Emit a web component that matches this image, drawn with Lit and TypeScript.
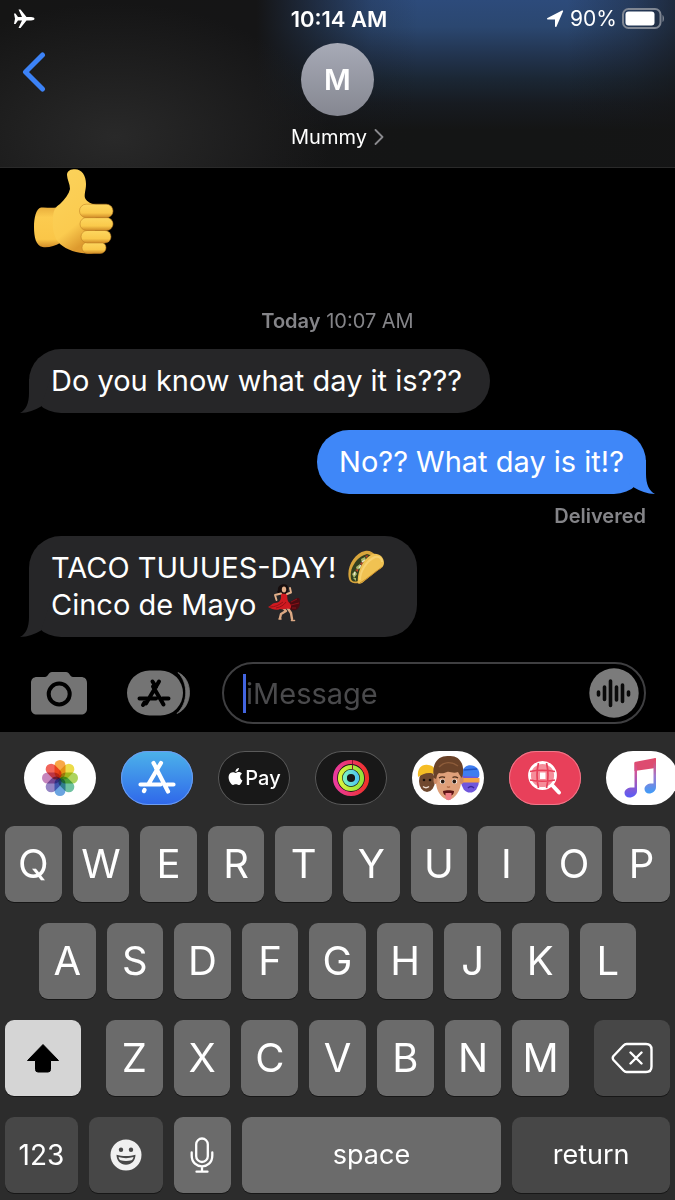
import { LitElement, html, css, svg, nothing } from "lit";
import { customElement, property, state } from "lit/decorators.js";
import { classMap } from "lit/directives/class-map.js";

const thumbsUp = html`<svg class="thumb" viewBox="0 0 80 86" role="img" aria-label="Thumbs up">
  <defs>
    <linearGradient id="palm" x1="0" y1="0" x2="0.4" y2="1">
      <stop offset="0" stop-color="#fbd35c" /><stop offset="0.75" stop-color="#fbcb4f" /><stop offset="1" stop-color="#dd9a2e" />
    </linearGradient>
    <linearGradient id="wrist" x1="0" y1="0" x2="0" y2="1">
      <stop offset="0" stop-color="#e9ae3c" /><stop offset="0.25" stop-color="#fccb4f" /><stop offset="0.8" stop-color="#fac648" /><stop offset="1" stop-color="#d18c28" />
    </linearGradient>
    <linearGradient id="finger" x1="0" y1="0" x2="0" y2="1">
      <stop offset="0" stop-color="#fdd75f" /><stop offset="0.65" stop-color="#fac94b" /><stop offset="1" stop-color="#cf8a26" />
    </linearGradient>
  </defs>
  <path d="M7 38.500C12 38 17 39.500 22 38.500L26 74C21 77 14 79 8.500 78C2 77 0 68 0 58C0 49 2 39.500 7 38.500Z" fill="url(#wrist)" />
  <path d="M33 6C33 1.500 37 .3 41 .3C48 .3 52 7 52 15C52 21 50 25 51 29C53 33 58 35 62 36L60 84C48 86 34 82 26 75C20 69 18 60 19 50C19 42 21 38 26 35C31 30 35 25 36 20C36 15 33 10 33 6Z" fill="url(#palm)" />
  <g stroke="#c08023" stroke-opacity=".55">
    <rect x="48" y="73" width="24" height="11.500" rx="5.700" fill="url(#finger)" />
    <rect x="47" y="61.500" width="30" height="12.500" rx="6.200" fill="url(#finger)" />
    <rect x="46" y="48.500" width="33" height="13" rx="6.500" fill="url(#finger)" />
    <rect x="45.500" y="35.200" width="33.500" height="13.500" rx="6.700" fill="url(#finger)" />
  </g>
</svg>`;

const taco = html`<svg class="emoji" viewBox="0 0 38 34" role="img" aria-label="Taco">
  <path d="M2 29C-1 18 7 3 18 1C22 0 26 2 28 5L12 33C8 34 3 33 2 29Z" fill="#d8a53c" />
  <path d="M4 29C2 19 9 7 20 4L26 6L11 31C8 32 5 32 4 29Z" fill="#33401f" />
  <path d="M5 24l3-3 2 3-3 4zM9 17l4-3 1 4-4 2zM14 9l4-2 1 3-4 3zM6 28l3 0 0 3z" fill="#a9b76a" />
  <path d="M8 20l3-1 0 3zM13 13l3-1-1 4zM18 6l3-1-1 3z" fill="#b8452b" />
  <path d="M7 25l1-3M12 18l2-3M15 12l3-2" stroke="#efe7cf" stroke-width="1.300" />
  <path d="M11 33C10 22 16 8 26 4C32 3 37 7 37 13C37 16 35 18 31 20L15 33C13 34 11 34 11 33Z" fill="#f0c252" />
  <path d="M13 30C13 22 19 11 28 7C32 6 35 8 35 12" fill="none" stroke="#fbdc83" stroke-width="2" opacity=".6" />
  <path d="M13 33C20 29 28 22 35 17" fill="none" stroke="#c98e2a" stroke-width="1" />
</svg>`;

const dancer = html`<svg class="emoji dancer" viewBox="0 0 34 38" role="img" aria-label="Woman dancing">
  <path d="M11 6C10 1 17-1 20 1C22 4 21 8 19 10C16 11 12 10 10 8Z" fill="#160d0d" />
  <path d="M21 18C24 19 28 13 32 14C34 18 33 24 29 26C25 27 22 25 20 23Z" fill="#4b0a10" />
  <path d="M24 18L30 15M24 21L32 19M25 24L29 24" stroke="#8c1018" stroke-width="1" />
  <path d="M16 24L19 27L14 30L13 34M20 23L24 29L25 35" fill="none" stroke="#dca984" stroke-width="2.400" stroke-linecap="round" stroke-linejoin="round" />
  <path d="M14 9.500L20 10C20.500 13 20 16 21.500 18C24 20 25 23 23 25C19 24 17 26 13 25C9 27 5 25 1 23C4 22 5 19 8 19C12 19 14 16 14 13Z" fill="#cf1a20" />
  <path d="M3 23C8 23 12 21 16 18M9 24C14 23 17 21 19 18" fill="none" stroke="#8d0e14" stroke-width=".9" />
  <path d="M14 9.500L8 11L9.500 16M20 10L24 8.500L23 4" fill="none" stroke="#e3b08a" stroke-width="1.900" stroke-linecap="round" stroke-linejoin="round" />
  <ellipse cx="17" cy="5.500" rx="2.200" ry="2.900" fill="#e3b08a" />
  <path d="M12 35h2M24.500 36.500h3" stroke="#dca984" stroke-width="1.600" stroke-linecap="round" />
</svg>`;

const storeGlyph = svg`
  <path d="M-1.500-12.500L2-7M5-12.500L-8 9.500M-1-7.500L9.500 10.500M-14.500 4.500H2M8.500 4.500H14.500" fill="none" stroke="currentColor" stroke-width="4" stroke-linecap="round" />
  <path d="M-9.500 8.500L-11 11" fill="none" stroke="currentColor" stroke-width="4" stroke-linecap="round" />`;

const petals = ["#f7941d", "#e8d420", "#9bca3c", "#4fb58c", "#4a90d9", "#7d6bb8", "#b96bae", "#ee4136"];

const art = {
  photos: html`<svg viewBox="0 0 72 54" aria-hidden="true">
    <g class="petals">${petals.map((c, i) => svg`<rect x="30.500" y="9" width="11" height="18" rx="5.500" fill=${c} opacity=".82" transform="rotate(${i * 45} 36 27)" />`)}</g>
  </svg>`,
  store: html`<svg viewBox="0 0 72 54" aria-hidden="true"><g transform="translate(36 27)">
    <path d="M-3.500-15L-.5-9.500M4-15L-8.500 6M-1-10L11 13.500M-16.500 6.500H3.500M10 6.500H16.500M-12.500 12L-13 13" fill="none" stroke="#fff" stroke-width="4.200" stroke-linecap="round" />
  </g></svg>`,
  pay: html`<svg class="apple" viewBox="0 0 24 24" aria-hidden="true"><path fill="#fff" d="M12.152 6.896c-.948 0-2.415-1.078-3.960-1.040-2.040.027-3.910 1.183-4.961 3.014-2.117 3.675-.546 9.103 1.519 12.090 1.013 1.454 2.208 3.090 3.792 3.039 1.520-.065 2.090-.987 3.935-.987 1.831 0 2.350.987 3.960.948 1.637-.026 2.676-1.480 3.676-2.948 1.156-1.688 1.636-3.325 1.662-3.415-.039-.013-3.182-1.221-3.220-4.857-.026-3.040 2.480-4.494 2.597-4.559-1.429-2.090-3.623-2.324-4.390-2.376-2-.156-3.675 1.090-4.610 1.090zM15.530 3.830c.843-1.012 1.400-2.427 1.245-3.830-1.207.052-2.662.805-3.532 1.818-.780.896-1.454 2.338-1.273 3.714 1.338.104 2.715-.688 3.559-1.701" /></svg><span class="pay-word">Pay</span>`,
  fitness: html`<svg viewBox="0 0 72 54" aria-hidden="true">
    <defs>
      <linearGradient id="move"><stop offset="0" stop-color="#ea3a9d" /><stop offset="1" stop-color="#f0322b" /></linearGradient>
      <linearGradient id="exercise"><stop offset="0" stop-color="#d9f43c" /><stop offset="1" stop-color="#93e43b" /></linearGradient>
      <linearGradient id="stand"><stop offset="0" stop-color="#7af0c2" /><stop offset="1" stop-color="#50c8f0" /></linearGradient>
    </defs>
    <g fill="none" stroke-width="4.200">
      <circle cx="36" cy="27" r="16" stroke="url(#move)" />
      <circle cx="36" cy="27" r="11" stroke="url(#exercise)" />
      <circle cx="36" cy="27" r="6.200" stroke="url(#stand)" />
    </g>
    <path d="M37.500 9V13M37.500 14V18" stroke="#8b1430" stroke-width="1" />
  </svg>`,
  memoji: html`<svg viewBox="0 0 72 54" aria-hidden="true">
    <ellipse cx="15" cy="30" rx="8" ry="11" fill="#70482e" />
    <path d="M6 26C5 17 10 13 16 14C21 14 24 18 24 24C17 20 11 23 6 26Z" fill="#f5bd25" />
    <path d="M11 35.500Q14 38 17 35.500" stroke="#e8d8cc" stroke-width="1.400" fill="none" /><circle cx="12" cy="29" r="1.300" fill="#1b100a" /><circle cx="18" cy="29" r="1.300" fill="#1b100a" />
    <ellipse cx="58" cy="30" rx="9" ry="11.500" fill="#7057dc" />
    <path d="M50 22C51 15 57 13 62 15C67 17 68 22 67 26L50 25Z" fill="#3e7df0" />
    <path d="M52 19L65 18" stroke="#2255c4" stroke-width="1.500" /><rect x="50" y="27" width="17.500" height="4.500" fill="#f2a347" />
    <path d="M56 37Q59 34 62 37" stroke="#3a259c" stroke-width="1.500" fill="none" />
    <path d="M24 22C24 15 29 12 37 12C45 12 50 16 49 25L49 31C49 39 43 48 36.500 49C30 48 24 40 24 31Z" fill="#dfa07a" />
    <ellipse cx="23.500" cy="29" rx="2" ry="4" fill="#cf8b65" /><ellipse cx="49.500" cy="29" rx="2" ry="4" fill="#cf8b65" />
    <path d="M22 27C19 13 26 4 37 5C47 4 54 13 50 27C48 25 47 23 46 21C41 23 38 20 35 21C31 23 28 22 27 22C25 23 25 25 24 28Z" fill="#6a4228" />
    <path d="M27 16C32 11 39 10 46 15" fill="none" stroke="#8d5c3a" stroke-width="1.500" />
    <path d="M27 27Q30 25 33 26.500M40.500 26.500Q43 25 46 27" fill="none" stroke="#4d2c18" stroke-width="1.400" />
    <ellipse cx="30.500" cy="30.500" rx="2.600" ry="2.200" fill="#fff" /><ellipse cx="42.500" cy="30.500" rx="2.600" ry="2.200" fill="#fff" />
    <circle cx="30.700" cy="30.500" r="1.900" fill="#2a1a10" /><circle cx="42.300" cy="30.500" r="1.900" fill="#2a1a10" />
    <path d="M35 35.500Q36.500 37 38 35.500" fill="none" stroke="#b06b48" stroke-width="1.200" />
    <path d="M31 40C34 39 39 39 42 40C42 43 40 45 36.500 45C33 45 31 43 31 40Z" fill="#5e1515" />
    <path d="M33.500 42H39.500V47C39 50 34 50 33.500 47Z" fill="#ee7f86" />
  </svg>`,
  images: html`<svg viewBox="0 0 72 54" aria-hidden="true">
    <g fill="none" stroke="#fff">
      <circle cx="33.500" cy="24.500" r="13" fill="#f58d9a" stroke-width="2.800" />
      <path d="M29.500 12Q26.500 24 29.500 37M37.500 12Q40.500 24 37.500 37M21 20.500Q33 18 46 20.500M21 29Q33 31.500 46 29" stroke="#e8405a" stroke-width="1.700" />
      <path d="M43.500 34.500L50 41.500" stroke-width="4" stroke-linecap="round" />
    </g>
    <path d="M31 21.500H36.500V28H31Z" fill="#fff" />
  </svg>`,
  music: html`<svg viewBox="0 0 72 54" aria-hidden="true">
    <defs>
      <linearGradient id="stem" gradientUnits="userSpaceOnUse" x1="30" y1="8" x2="30" y2="46"><stop offset="0" stop-color="#e8455e" /><stop offset="0.350" stop-color="#d0569a" /><stop offset="1" stop-color="#5a5cf5" /></linearGradient>
      <linearGradient id="stem2" gradientUnits="userSpaceOnUse" x1="50" y1="8" x2="50" y2="42"><stop offset="0" stop-color="#e8455e" /><stop offset="0.500" stop-color="#a07ad0" /><stop offset="1" stop-color="#3f9bf7" /></linearGradient>
    </defs>
    <path d="M28.500 11L49.500 7V17L28.500 20Z" fill="#dd4c70" />
    <path d="M28.500 12H31V40C31 44 27 46.500 23.500 46.500C20.500 46.500 18.500 44.500 18.500 42C18.500 38.500 22 36.500 26 36.500H28.500Z" fill="url(#stem)" />
    <path d="M47.500 8L50 7V36C50 40 46.500 42.500 43 42.500C40.500 42.500 38.500 40.500 38.500 38C38.500 34.500 42 32.500 45.500 32.500H47.500Z" fill="url(#stem2)" />
  </svg>`,
};

const drawerApps: { id: keyof typeof art; label: string }[] = [
  { id: "photos", label: "Photos" },
  { id: "store", label: "App Store" },
  { id: "pay", label: "Apple Pay" },
  { id: "fitness", label: "Fitness" },
  { id: "memoji", label: "Memoji" },
  { id: "images", label: "#images" },
  { id: "music", label: "Music" },
];

@customElement("chat-bubble")
class ChatBubble extends LitElement {
  @property({ type: Boolean, reflect: true }) sent = false;

  static styles = css`
    :host {
      display: block;
      position: relative;
      align-self: flex-start;
      max-width: 75%;
      box-sizing: border-box;
      padding: 13px 28px 14px 22px;
      border-radius: 32px;
      background: #262628;
      color: #fff;
      font-size: 29px;
      line-height: 37px;
    }
    :host([sent]) {
      align-self: flex-end;
      padding: 13px 22px 14px;
      background: #3f87f8;
    }
    .tail {
      position: absolute;
      bottom: 0;
      left: -9px;
      width: 30px;
      height: 34px;
      fill: #262628;
    }
    :host([sent]) .tail {
      left: auto;
      right: -9px;
      fill: #3f87f8;
      transform: scaleX(-1);
    }
  `;

  render() {
    return html`<svg class="tail" viewBox="0 0 30 34" aria-hidden="true">
        <path d="M9 0V14C9 24 6 31 0 34C8 34 15 31 21 27.500L30 0Z" />
      </svg><slot></slot>`;
  }
}

@customElement("app-root")
class AppRoot extends LitElement {
  @state() private draft = "";

  static styles = css`
    :host {
      display: flex;
      flex-direction: column;
      min-height: 100vh;
      overflow: hidden;
      background: #000;
      color: #fff;
      font-family: Inter, "Liberation Sans", sans-serif;
    }
    svg {
      display: block;
      flex: none;
    }
    button {
      margin: 0;
      padding: 0;
      border: 0;
      background: none;
      color: inherit;
      font: inherit;
      cursor: pointer;
    }
    .top {
      border-bottom: 1px solid #2a2a2a;
      background:
        radial-gradient(ellipse 32% 80% at 17% 82%, #292929 0%, rgba(38, 38, 38, 0) 100%),
        linear-gradient(
          90deg,
          #151515 0%,
          #151516 38%,
          rgba(21, 21, 22, 0.6) 46%,
          rgba(21, 21, 22, 0.15) 55%,
          rgba(21, 21, 22, 0) 62%,
          rgba(21, 21, 22, 0) 84%,
          rgba(21, 21, 22, 0.3) 94%,
          rgba(21, 21, 22, 0.6) 100%
        ),
        linear-gradient(#2d4b7b 0%, #2b4770 16%, #22344f 33%, #1b2735 47%, #171b21 62%, #141515 78%);
    }
    .status {
      display: grid;
      grid-template-columns: 1fr auto 1fr;
      align-items: center;
      height: 37px;
      padding: 0 10px 0 13px;
      font-size: 21px;
      line-height: 24px;
    }
    .time {
      font-size: 22px;
      font-weight: 600;
    }
    .power {
      display: flex;
      align-items: center;
      justify-content: flex-end;
    }
    .locator {
      margin-right: 6px;
    }
    .battery {
      margin-left: 5px;
    }
    .nav {
      display: grid;
      grid-template-columns: 1fr auto 1fr;
      padding: 6px 22px 18px;
    }
    .back {
      justify-self: start;
      align-self: start;
      margin-top: 9px;
    }
    .contact {
      display: flex;
      flex-direction: column;
      align-items: center;
      gap: 9px;
      font-size: 20px;
      line-height: 24px;
    }
    .avatar {
      display: grid;
      place-items: center;
      width: 73px;
      height: 73px;
      border-radius: 50%;
      background: linear-gradient(#a7aab6, #858791);
      font-size: 29px;
      font-weight: 600;
    }
    .name {
      display: flex;
      align-items: center;
      gap: 7px;
    }
    .chat {
      display: flex;
      flex: 1;
      flex-direction: column;
      padding: 1px 29px 0;
    }
    .thumb {
      width: 80px;
      height: 86px;
      margin-left: 5px;
    }
    .stamp {
      align-self: center;
      margin: 54px 0 16px;
      color: #848488;
      font-size: 20px;
      line-height: 24px;
    }
    .stamp strong {
      font-weight: 600;
    }
    .reply {
      margin-top: 17px;
    }
    .receipt {
      align-self: flex-end;
      margin: 10px 0 8px;
      color: #848488;
      font-size: 20px;
      font-weight: 600;
      line-height: 24px;
    }
    .emoji {
      display: inline-block;
      width: 38px;
      height: 34px;
      margin: -4px 4px -4px 2px;
      vertical-align: -2px;
    }
    .dancer {
      width: 34px;
      height: 38px;
      vertical-align: -3px;
    }
    .composer {
      display: flex;
      align-items: center;
      padding: 24px 29px 8px 31px;
    }
    .tool {
      color: #747474;
    }
    .tool-apps {
      margin: 0 32px 0 40px;
    }
    .field {
      display: flex;
      flex: 1;
      align-items: center;
      min-width: 0;
      box-sizing: border-box;
      height: 62px;
      padding: 0 5px 0 19px;
      border: 2px solid #3f3f41;
      border-radius: 31px;
    }
    .caret {
      flex: none;
      width: 3px;
      height: 39px;
      background: #4365e0;
    }
    .entry {
      flex: 1;
      min-width: 0;
      padding: 0;
      border: 0;
      outline: 0;
      background: none;
      color: #fff;
      font: inherit;
      font-size: 29px;
      line-height: 37px;
    }
    .entry::placeholder {
      color: #4a4a4c;
      opacity: 1;
    }
    .keyboard {
      background: #2c2c2c;
    }
    .drawer {
      display: flex;
      gap: 25px;
      overflow: hidden;
      padding: 19px 0 21px 24px;
    }
    .app {
      display: flex;
      flex: none;
      align-items: center;
      justify-content: center;
      width: 72px;
      height: 54px;
      overflow: hidden;
      border-radius: 27px;
      background: #fff;
    }
    .app > svg {
      width: 72px;
      height: 54px;
    }
    .app.store {
      background: linear-gradient(#4cb2ea, #2f67ea);
      box-shadow: inset 0 0 0 1px #6d9df0;
    }
    .app.pay,
    .app.fitness {
      background: #181818;
      box-shadow: inset 0 0 0 1px #5a5a5a;
    }
    .app.images {
      background: #e8405a;
      box-shadow: inset 0 0 0 1px #f0788a;
    }
    .petals rect {
      mix-blend-mode: multiply;
    }
    .app > .apple {
      width: 17px;
      height: 17px;
      margin: 0 1px 3px 0;
    }
    .pay-word {
      font-size: 20px;
      font-weight: 500;
      line-height: 24px;
    }
    .rows {
      display: grid;
      gap: 21px;
      padding: 0 5px 7px;
    }
    .row {
      display: flex;
      gap: 11px;
    }
    .row.home {
      padding: 0 34px;
    }
    .letters {
      display: flex;
      flex: 1;
      gap: 11px;
      margin: 0 14px;
    }
    .key {
      display: grid;
      flex: 1 1 0;
      place-items: center;
      min-width: 0;
      height: 76px;
      border-radius: 9px;
      background: #6b6b6b;
      box-shadow: 0 1px 0 #171717;
      font-size: 40px;
      line-height: 48px;
    }
    .key.dark {
      background: #474747;
    }
    .key.shift {
      flex: 0 0 76px;
      background: #d5d5d5;
    }
    .key.erase {
      flex: 0 0 76px;
    }
    .key.word {
      font-size: 27px;
      line-height: 36px;
    }
    .key.numbers {
      flex-grow: 73;
      font-size: 28px;
    }
    .key.smile {
      flex-grow: 74;
    }
    .key.voice {
      flex-grow: 57;
    }
    .key.space {
      flex-grow: 260;
    }
    .key.return {
      flex-grow: 158;
    }
  `;

  private letterKeys(letters: string) {
    return [...letters].map(
      (l) => html`<button class="key" type="button" @click=${() => (this.draft += l)}>${l}</button>`,
    );
  }

  private header() {
    return html`<header class="top">
      <div class="status">
        <svg width="22" height="20" viewBox="0 0 22 20" role="img" aria-label="Airplane mode">
          <path fill="#fff" d="M1 4.500H2.500L5 8H9L5.500 .5H7.500L13.500 8H18C20 8 21.500 8.800 21.500 9.700C21.500 10.600 20 11.400 18 11.400H13.500L7.500 19H5.500L9 11.400H5L2.500 15H1L2 9.700Z" />
        </svg>
        <span class="time">10:14 AM</span>
        <div class="power">
          <svg class="locator" width="18" height="18" viewBox="0 0 18 18" role="img" aria-label="Location in use">
            <path fill="#fff" d="M17 1.500L10.500 16.500C10 17.500 9 17 9 16.200V9.500H1.800C.8 9.500 .6 8.500 1.500 8L16 .6C16.800 .2 17.400 .8 17 1.500Z" />
          </svg>
          <span>90%</span>
          <svg class="battery" width="43" height="21" viewBox="0 0 43 21" role="img" aria-label="Battery">
            <rect x="1" y="1" width="37.500" height="19" rx="5.500" fill="none" stroke="#7f8692" stroke-width="2" />
            <rect x="3.500" y="3.500" width="29" height="14" rx="3" fill="#fff" />
            <path d="M40.500 7C42.500 8 42.500 13 40.500 14Z" fill="#7f8692" />
          </svg>
        </div>
      </div>
      <div class="nav">
        <button class="back" type="button" aria-label="Back">
          <svg width="24" height="40" viewBox="0 0 24 40"><path d="M20.500 3L3.500 20L20.500 37" fill="none" stroke="#3c82f6" stroke-width="5" stroke-linecap="round" stroke-linejoin="round" /></svg>
        </button>
        <button class="contact" type="button">
          <span class="avatar">M</span>
          <span class="name">Mummy
            <svg width="10" height="16" viewBox="0 0 10 16" aria-hidden="true"><path d="M1.500 1L8.500 8L1.500 15" fill="none" stroke="#8a8a8e" stroke-width="1.800" stroke-linecap="round" stroke-linejoin="round" /></svg>
          </span>
        </button>
      </div>
    </header>`;
  }

  private composer() {
    return html`<form class="composer" @submit=${(e: Event) => e.preventDefault()}>
      <button class="tool" type="button" aria-label="Camera">
        <svg width="56" height="44" viewBox="0 0 56 44">
          <path fill="currentColor" d="M6 6H14C17 6 17.500 1 21 1H35C38.500 1 39 6 42 6H50C53.500 6 56 8 56 12V38C56 41.500 53.500 43.500 50 43.500H6C2.500 43.500 0 41.500 0 38V12C0 8 2.500 6 6 6Z" />
          <circle cx="28.200" cy="23" r="10.500" fill="none" stroke="#000" stroke-width="4" />
        </svg>
      </button>
      <button class="tool tool-apps" type="button" aria-label="Apps">
        <svg width="63" height="46" viewBox="0 0 63 46">
          <rect x="0" y=".5" width="56" height="45" rx="22.500" fill="currentColor" />
          <path d="M51 2.500C66.500 9 66.500 36.500 50 43.500C61.500 33 61.500 13 51 2.500Z" fill="currentColor" stroke="currentColor" stroke-width=".8" />
          <g transform="translate(27 24)" color="#000">${storeGlyph}</g>
        </svg>
      </button>
      <div class="field">
        ${this.draft ? nothing : html`<span class="caret"></span>`}
        <input
          class="entry"
          type="text"
          aria-label="Message"
          placeholder="iMessage"
          .value=${this.draft}
          @input=${(e: Event) => (this.draft = (e.target as HTMLInputElement).value)}
        />
        <button type="button" aria-label="Record audio">
          <svg width="50" height="50" viewBox="0 0 50 50">
            <circle cx="25" cy="25" r="24.700" fill="#7b7b7b" />
            <path d="M9.500 24V27M15.500 19V31.500M21.500 13V37.500M27.500 19V32M33.500 17V33.500M39.500 24V27" stroke="#0a0a0a" stroke-width="3.600" stroke-linecap="round" />
          </svg>
        </button>
      </div>
    </form>`;
  }

  private keyboard() {
    return html`<section class="keyboard" aria-label="Keyboard">
      <nav class="drawer" aria-label="iMessage apps">
        ${drawerApps.map(
          (app) => html`<button class=${classMap({ app: true, [app.id]: true })} type="button" aria-label=${app.label}>${art[app.id]}</button>`,
        )}
      </nav>
      <div class="rows">
        <div class="row">${this.letterKeys("QWERTYUIOP")}</div>
        <div class="row home">${this.letterKeys("ASDFGHJKL")}</div>
        <div class="row">
          <button class="key shift" type="button" aria-label="Shift">
            <svg width="34" height="30" viewBox="0 0 34 30"><path d="M17 1.500L32.500 17.500H24.500V26.500Q24.500 29 22 29H12Q9.500 29 9.500 26.500V17.500H1.500Z" fill="#000" stroke="#000" stroke-linejoin="round" /></svg>
          </button>
          <div class="letters">${this.letterKeys("ZXCVBNM")}</div>
          <button class="key dark erase" type="button" aria-label="Delete" @click=${() => (this.draft = this.draft.slice(0, -1))}>
            <svg width="42" height="32" viewBox="0 0 42 32"><path d="M15.500 2H35Q40.500 2 40.500 7.500V24.500Q40.500 30 35 30H15.500Q14 30 12.500 28.500L2.500 18Q1 16 2.500 14L12.500 3.500Q14 2 15.500 2ZM19.500 10.500L30.500 21.500M30.500 10.500L19.500 21.500" fill="none" stroke="#fff" stroke-width="2.400" stroke-linecap="round" stroke-linejoin="round" /></svg>
          </button>
        </div>
        <div class="row">
          <button class="key dark word numbers" type="button">123</button>
          <button class="key dark smile" type="button" aria-label="Emoji">
            <svg width="32" height="32" viewBox="0 0 32 32">
              <circle cx="16" cy="16" r="15.500" fill="#f0f0f0" />
              <circle cx="11" cy="10.800" r="2.200" fill="#474747" /><circle cx="21" cy="10.800" r="2.200" fill="#474747" />
              <path d="M6.500 15.700C12 17.500 20 17.500 25.500 15.700C25.500 21.500 21.500 25.700 16 25.700C10.500 25.700 6.500 21.500 6.500 15.700Z" fill="#474747" />
              <path d="M8.500 18C13 19.500 19 19.500 23.500 18C23 20 22.500 20.800 21.500 21.300C18 22.300 14 22.300 10.500 21.300C9.500 20.800 9 20 8.500 18Z" fill="#f0f0f0" />
            </svg>
          </button>
          <button class="key voice" type="button" aria-label="Dictate">
            <svg width="24" height="36" viewBox="0 0 24 36"><g fill="none" stroke="#fff" stroke-width="2.300" stroke-linecap="round"><rect x="6.200" y="1.500" width="11.600" height="23.500" rx="5.800" /><path d="M1.700 15.500V18.500C1.700 33 22.300 33 22.300 18.500V15.500M12 29.500V34.500M6.500 34.700H17.500" /></g></svg>
          </button>
          <button class="key word space" type="button" @click=${() => (this.draft += " ")}>space</button>
          <button class="key dark word return" type="button">return</button>
        </div>
      </div>
    </section>`;
  }

  render() {
    return html`
      ${this.header()}
      <main class="chat">
        ${thumbsUp}
        <div class="stamp"><strong>Today</strong> 10:07 AM</div>
        <chat-bubble>Do you know what day it is???</chat-bubble>
        <chat-bubble class="reply" sent>No?? What day is it!?</chat-bubble>
        <div class="receipt">Delivered</div>
        <chat-bubble>TACO TUUUES-DAY! ${taco}<br />Cinco de Mayo ${dancer}</chat-bubble>
      </main>
      ${this.composer()} ${this.keyboard()}
    `;
  }
}
